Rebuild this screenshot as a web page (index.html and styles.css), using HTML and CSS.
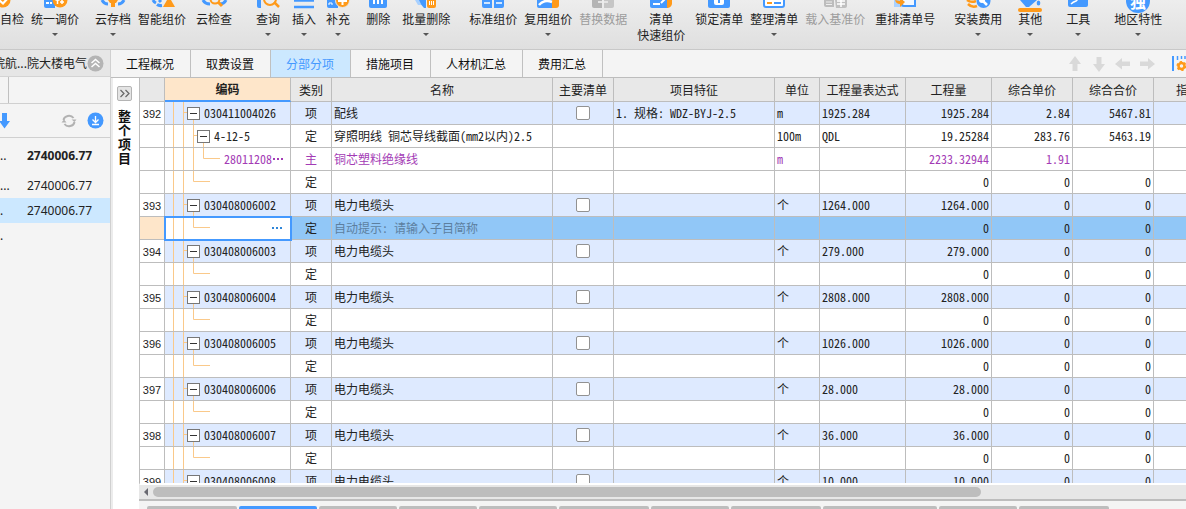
FILE: index.html
```html
<!DOCTYPE html>
<html lang="zh-CN">
<head>
<meta charset="utf-8">
<title>分部分项</title>
<link rel="stylesheet" href="styles.css">
</head>
<body>
<svg class="defs" aria-hidden="true">
  <symbol id="g-item" viewBox="0 0 60 22"><path d="M8.500 0V22M18.500 0V22M19 10.500H22M28.500 17V22"/></symbol>
  <symbol id="g-sub" viewBox="0 0 60 22"><path d="M8.500 0V22M18.500 0V22M28.500 0V22M29 10.500H32M38.500 17V22"/></symbol>
  <symbol id="g-leaf" viewBox="0 0 60 22"><path d="M8.500 0V22M18.500 0V22M28.500 0V22M38.500 0V10.500H55"/></symbol>
  <symbol id="g-end" viewBox="0 0 60 22"><path d="M8.500 0V22M18.500 0V22M28.500 0V10.500H45"/></symbol>
</svg>

<header class="toolbar">
  <button class="tool"><svg class="icon" viewBox="0 0 24 13"><circle cx="3" cy="0" r="7.500" fill="#ff9a1a"/><path d="M-1 0L3 3.500L8 -2" fill="none" stroke="#fff" stroke-width="2.200"/></svg>自检</button>
  <button class="tool s7"><svg class="icon" viewBox="0 0 24 13"><path d="M1 0H12V8H3Q1 8 1 6Z" fill="#4499ff"/><path d="M3 3H6M7 3H9" stroke="#fff" stroke-width="2"/><circle cx="17" cy="0" r="7.500" fill="#ff9a1a"/><path d="M14.500 -3V4M19 -3V4M12.500 0H16.500M17 2H21" stroke="#fff" stroke-width="1.500"/></svg>统一调价<i class="caret"></i></button>
  <button class="tool s16"><svg class="icon" viewBox="0 0 24 13"><path d="M1 0Q3 4 7 4M23 0Q21 4 17 4" fill="none" stroke="#4499ff" stroke-width="3"/><path d="M7 0H17L15 3H14V7H10V3H9Z" fill="#ff9a1a"/></svg>云存档<i class="caret"></i></button>
  <button class="tool s7"><svg class="icon" viewBox="0 0 24 13"><path d="M3 0Q4 2 6 3M7 4.500Q9 6 12 5.500M9 0L11 2" fill="none" stroke="#4499ff" stroke-width="3"/><path d="M17 0H21L25 7H13Z" fill="#ff9a1a"/></svg>智能组价</button>
  <button class="tool s10"><svg class="icon" viewBox="0 0 24 13"><path d="M1 0Q3 4 8 4M18 4Q22 4 24 0" fill="none" stroke="#4499ff" stroke-width="3"/><circle cx="13" cy="-1" r="4.500" fill="none" stroke="#ff9a1a" stroke-width="2"/><path d="M16 2L20 6" stroke="#ff9a1a" stroke-width="3"/></svg>云检查</button>
  <button class="tool s24"><svg class="icon" viewBox="0 0 24 13"><path d="M1 0H5V8H3Q1 8 1 6Z" fill="#4499ff"/><circle cx="14" cy="-1" r="6" fill="none" stroke="#ff9a1a" stroke-width="2"/><path d="M18 2L23 7" stroke="#ff9a1a" stroke-width="2.500"/></svg>查询<i class="caret"></i></button>
  <button class="tool s12"><svg class="icon" viewBox="0 0 24 13"><path d="M2 0.500H22M2 7H22" stroke="#4499ff" stroke-width="2.500"/></svg>插入<i class="caret"></i></button>
  <button class="tool s10"><svg class="icon" viewBox="0 0 24 13"><path d="M1 0H12V8H3Q1 8 1 6Z" fill="#4499ff"/><path d="M3 5V3H6V5" stroke="#fff" fill="none"/><circle cx="16.500" cy="0.500" r="7" fill="#ff9a1a" stroke="#e9e9e9"/><path d="M16.500 -4V5M12 1H21" stroke="#fff" stroke-width="2"/></svg>补充<i class="caret"></i></button>
  <button class="tool s16"><svg class="icon" viewBox="0 0 24 13"><path d="M3 0H21V6Q21 8 19 8H5Q3 8 3 6Z" fill="#4499ff"/><path d="M8 0V4M12 0V4M16 0V4" stroke="#fff" stroke-width="2"/></svg>删除</button>
  <button class="tool s12"><svg class="icon" viewBox="0 0 24 13"><path d="M1 0H8V5H4Z" fill="#a7d0ff"/><path d="M5 0H12V8H10Q7 5 5 0Z" fill="#4499ff"/><path d="M13 0H22V6Q22 8 20 8H15Q13 8 13 6Z" fill="#ff9a1a"/><path d="M15.500 1V5M17.500 1V5M19.500 1V5" stroke="#fff"/></svg>批量删除<i class="caret"></i></button>
  <button class="tool s19"><svg class="icon" viewBox="0 0 24 13"><path d="M1 0H11V8H3Q1 8 1 6ZM13 0H23V6Q23 8 21 8H13Z" fill="#4499ff"/><path d="M3 3H9M15 3H21" stroke="#fff" stroke-width="1.500"/></svg>标准组价</button>
  <button class="tool s7"><svg class="icon" viewBox="0 0 24 13"><path d="M1 0H19V8H3Q1 8 1 6Z" fill="#4499ff"/><path d="M16 0H23V5Q23 8 20 8H16Z" fill="#ff9a1a"/><path d="M3 5Q8 -1 16 2" stroke="#fff" stroke-width="2.500" fill="none"/></svg>复用组价<i class="caret"></i></button>
  <button class="tool s7" disabled><svg class="icon" viewBox="0 0 24 13"><path d="M1 0H11V8H3Q1 8 1 6Z" fill="#b4b4b4"/><path d="M13 0H23V6Q23 8 21 8H13Z" fill="#c6c6c6"/><path d="M7 2H11M13 2H17" stroke="#e4e4e4" stroke-width="2"/></svg>替换数据</button>
  <button class="tool s10"><svg class="icon" viewBox="0 0 24 13"><path d="M1 0H19V8H3Q1 8 1 6Z" fill="#4499ff"/><path d="M18 0H23V4Q22 8 18 8Z" fill="#ff9a1a"/><path d="M4 4H11M12 3L17 -2" stroke="#fff" stroke-width="2"/></svg>清单<span>快速组价</span></button>
  <button class="tool s10"><svg class="icon" viewBox="0 0 24 13"><path d="M1 0H23V6Q23 8 21 8H3Q1 8 1 6Z" fill="#4499ff"/><rect x="7" y="-4" width="10" height="9" rx="2" fill="#fff"/><path d="M12 0V3" stroke="#4499ff" stroke-width="2"/></svg>锁定清单</button>
  <button class="tool s7"><svg class="icon" viewBox="0 0 24 13"><path d="M2 0V5Q2 7 4 7H20Q22 7 22 5V0" fill="#fff" stroke="#4499ff" stroke-width="2"/><path d="M5 3H10" stroke="#ff9a1a" stroke-width="2"/><path d="M12 3H19" stroke="#4499ff" stroke-width="2"/></svg>整理清单<i class="caret"></i></button>
  <button class="tool s7" disabled><svg class="icon" viewBox="0 0 24 13"><path d="M1 0H11V7H3Q1 7 1 5Z" fill="#bcbcbc"/><path d="M3 2H9M3 4.500H9" stroke="#eee"/><path d="M12 0H24V6Q24 8 22 8H13Z" fill="#c0c0c0"/><path d="M18 0V7M14 1H22M14 4H22" stroke="#fff" stroke-width="1.500"/></svg>载入基准价</button>
  <button class="tool s10"><svg class="icon" viewBox="0 0 24 13"><path d="M1 0H20V6Q20 7 18 7H1Z" fill="#a9d1ff"/><path d="M9 0V4Q9 6 11 6H22V0" fill="#f3f8ff" stroke="#4499ff" stroke-width="2"/><path d="M2 0Q3 4 7 4V7L12 2L7 -2V1Z" fill="#ff9a1a"/></svg>重排清单号</button>
  <button class="tool s19"><svg class="icon" viewBox="0 0 24 13"><path d="M1 0Q5 3 10 1M2 4Q6 8 11 6" fill="none" stroke="#ff9a1a" stroke-width="2.500"/><circle cx="17.500" cy="1" r="7" fill="#4499ff"/><path d="M16 0L21 5" stroke="#fff" stroke-width="2.500"/><circle cx="16" cy="0" r="3" fill="#fff"/></svg>安装费用<i class="caret"></i></button>
  <button class="tool s16"><svg class="icon" viewBox="0 0 24 13"><path d="M2 0H19L11 7H8Z" fill="#4499ff"/><ellipse cx="20.500" cy="3" rx="1.800" ry="2.500" fill="#4499ff"/><path d="M2 10H22" stroke="#ff9a1a" stroke-width="4" stroke-linecap="round"/></svg>其他<i class="caret"></i></button>
  <button class="tool s24"><svg class="icon" viewBox="0 0 24 13"><path d="M2 0H22V5Q22 7 20 7H4Q2 7 2 5Z" fill="#4499ff"/><path d="M5 4Q7 2 10 1L13 -2" stroke="#fff" stroke-width="1.500" fill="none"/></svg>工具<i class="caret"></i></button>
  <button class="tool s24"><svg class="icon" viewBox="0 0 24 13"><circle cx="12" cy="1" r="12" fill="#4499ff"/><text x="12" y="8" class="badge-text">独</text></svg>地区特性<i class="caret"></i></button>
</header>

<div class="workspace">
  <aside class="panel">
    <div class="panel-title"><span>院航...院大楼电气</span><button class="plain" aria-label="收起"><svg width="17" height="17" viewBox="0 0 17 17"><circle cx="8.500" cy="8.500" r="8" fill="#b4b4b4"/><path d="M4.500 8L8.500 4.500L12.500 8M4.500 12L8.500 8.500L12.500 12" fill="none" stroke="#fff" stroke-width="1.500"/></svg></button></div>
    <div class="panel-tabs"><span></span></div>
    <div class="panel-tools">
      <button class="plain" aria-label="下移"><svg width="10" height="16" viewBox="0 0 10 16"><path d="M2 0H7V8H10L4.500 15.500L-1 8H2Z" fill="#4499ff"/></svg></button>
      <span class="grow"></span>
      <button class="plain" aria-label="刷新"><svg width="16" height="16" viewBox="0 0 16 16"><path d="M2.500 7A5.500 5 0 0 1 12.500 5M13.500 9A5.500 5 0 0 1 3.500 11" fill="none" stroke="#b2b2b2" stroke-width="2"/><path d="M10.500 6.500H15.500L13.500 9ZM.500 9.500L3 6.500L5.500 9.500Z" fill="#b2b2b2"/></svg></button>
      <button class="plain" aria-label="下载"><svg width="17" height="17" viewBox="0 0 17 17"><circle cx="8.500" cy="8.500" r="8" fill="#4499ff"/><path d="M8.500 4V10M5.500 7.500L8.500 10.500L11.500 7.500M5 12.500H12" fill="none" stroke="#fff" stroke-width="1.300"/></svg></button>
    </div>
    <ul class="totals">
      <li class="total"><span>..</span><b>2740006.77</b></li>
      <li><span>...</span>2740006.77</li>
      <li class="current"><span>.</span>2740006.77</li>
      <li><span>.</span></li>
    </ul>
  </aside>

  <main class="main">
    <nav class="tabs">
      <button class="tab">工程概况</button>
      <button class="tab">取费设置</button>
      <button class="tab active">分部分项</button>
      <button class="tab">措施项目</button>
      <button class="tab">人材机汇总</button>
      <button class="tab">费用汇总</button>
      <div class="tab-actions">
        <button class="plain" aria-label="上移"><svg width="16" height="16" viewBox="0 0 16 16"><path d="M8 0L14 8H10.500V15H5.500V8H2Z" fill="#d9d9d9"/></svg></button>
        <button class="plain" aria-label="下移"><svg width="16" height="16" viewBox="0 0 16 16"><path d="M8 16L14 8H10.500V1H5.500V8H2Z" fill="#d9d9d9"/></svg></button>
        <button class="plain" aria-label="左移"><svg width="16" height="16" viewBox="0 0 16 16"><path d="M0 8L7 2V5.500H15V10H7V13.500Z" fill="#d9d9d9"/></svg></button>
        <button class="plain" aria-label="右移"><svg width="16" height="16" viewBox="0 0 16 16"><path d="M16 8L9 2V5.500H1V10H9V13.500Z" fill="#d9d9d9"/></svg></button>
        <button class="plain settings" aria-label="列设置"><svg width="14" height="16" viewBox="0 0 14 16"><path d="M1 0V15" stroke="#4499ff" stroke-width="2"/><path d="M5.500 0V4M9.500 0V3M13 0V3" stroke="#4499ff" stroke-width="1.500"/><circle cx="9.500" cy="10" r="3" fill="none" stroke="#ff9a1a" stroke-width="2.500"/><circle cx="9.500" cy="10" r="4.300" fill="none" stroke="#ff9a1a" stroke-width="1.500" stroke-dasharray="2.250 2.250"/></svg></button>
      </div>
    </nav>

    <div class="content">
      <div class="side">
        <button class="expand" aria-label="展开"><svg width="13" height="13" viewBox="0 0 13 13"><path d="M2.500 3L6 6.500L2.500 10M7.500 3L11 6.500L7.500 10" fill="none" stroke="#666" stroke-width="1.200"/></svg></button>
        <span class="side-label">整个项目</span>
      </div>

      <div class="sheet">
        <div class="viewport">
          <table class="grid">
            <colgroup><col class="c-no"><col class="c-code"><col class="c-kind"><col class="c-name"><col class="c-main"><col class="c-feat"><col class="c-unit"><col class="c-qty"><col class="c-qty"><col class="c-sum"><col class="c-sum"><col class="c-sum"></colgroup>
            <thead><tr><th></th><th class="sorted">编码</th><th>类别</th><th>名称</th><th>主要清单</th><th>项目特征</th><th>单位</th><th>工程量表达式</th><th>工程量</th><th>综合单价</th><th>综合合价</th><th class="cut">指</th></tr></thead>
            <tbody>
              <tr class="item"><th>392</th><td class="code"><div><svg class="guide"><use href="#g-item"/></svg><span><button class="fold" aria-label="折叠"></button>030411004026</span></div></td><td class="kind">项</td><td>配线</td><td class="pick"><input type="checkbox" aria-label="主要清单"></td><td>1. 规格: WDZ-BYJ-2.5</td><td>m</td><td>1925.284</td><td class="num">1925.284</td><td class="num">2.84</td><td class="num">5467.81</td><td></td></tr>
              <tr><th></th><td class="code sub"><div><svg class="guide"><use href="#g-sub"/></svg><span><button class="fold" aria-label="折叠"></button>4-12-5</span></div></td><td class="kind">定</td><td>穿照明线 铜芯导线截面(mm2以内)2.5</td><td></td><td></td><td>100m</td><td>QDL</td><td class="num">19.25284</td><td class="num">283.76</td><td class="num">5463.19</td><td></td></tr>
              <tr class="material"><th></th><td class="code leaf"><div><svg class="guide"><use href="#g-leaf"/></svg><span>28011208<i class="more"></i></span></div></td><td class="kind">主</td><td>铜芯塑料绝缘线</td><td></td><td></td><td>m</td><td></td><td class="num">2233.32944</td><td class="num">1.91</td><td></td><td></td></tr>
              <tr><th></th><td class="code"><div><svg class="guide"><use href="#g-end"/></svg></div></td><td class="kind">定</td><td></td><td></td><td></td><td></td><td></td><td class="num">0</td><td class="num">0</td><td class="num">0</td><td></td></tr>
              <tr class="item"><th>393</th><td class="code"><div><svg class="guide"><use href="#g-item"/></svg><span><button class="fold" aria-label="折叠"></button>030408006002</span></div></td><td class="kind">项</td><td>电力电缆头</td><td class="pick"><input type="checkbox" aria-label="主要清单"></td><td></td><td>个</td><td>1264.000</td><td class="num">1264.000</td><td class="num">0</td><td class="num">0</td><td></td></tr>
              <tr class="selected"><th></th><td class="code editing"><div><svg class="guide"><use href="#g-end"/></svg><button class="browse" aria-label="选择"><i class="more"></i></button></div></td><td class="kind">定</td><td class="hint">自动提示: 请输入子目简称</td><td></td><td></td><td></td><td></td><td class="num">0</td><td class="num">0</td><td class="num">0</td><td></td></tr>
              <tr class="item"><th>394</th><td class="code"><div><svg class="guide"><use href="#g-item"/></svg><span><button class="fold" aria-label="折叠"></button>030408006003</span></div></td><td class="kind">项</td><td>电力电缆头</td><td class="pick"><input type="checkbox" aria-label="主要清单"></td><td></td><td>个</td><td>279.000</td><td class="num">279.000</td><td class="num">0</td><td class="num">0</td><td></td></tr>
              <tr><th></th><td class="code"><div><svg class="guide"><use href="#g-end"/></svg></div></td><td class="kind">定</td><td></td><td></td><td></td><td></td><td></td><td class="num">0</td><td class="num">0</td><td class="num">0</td><td></td></tr>
              <tr class="item"><th>395</th><td class="code"><div><svg class="guide"><use href="#g-item"/></svg><span><button class="fold" aria-label="折叠"></button>030408006004</span></div></td><td class="kind">项</td><td>电力电缆头</td><td class="pick"><input type="checkbox" aria-label="主要清单"></td><td></td><td>个</td><td>2808.000</td><td class="num">2808.000</td><td class="num">0</td><td class="num">0</td><td></td></tr>
              <tr><th></th><td class="code"><div><svg class="guide"><use href="#g-end"/></svg></div></td><td class="kind">定</td><td></td><td></td><td></td><td></td><td></td><td class="num">0</td><td class="num">0</td><td class="num">0</td><td></td></tr>
              <tr class="item"><th>396</th><td class="code"><div><svg class="guide"><use href="#g-item"/></svg><span><button class="fold" aria-label="折叠"></button>030408006005</span></div></td><td class="kind">项</td><td>电力电缆头</td><td class="pick"><input type="checkbox" aria-label="主要清单"></td><td></td><td>个</td><td>1026.000</td><td class="num">1026.000</td><td class="num">0</td><td class="num">0</td><td></td></tr>
              <tr><th></th><td class="code"><div><svg class="guide"><use href="#g-end"/></svg></div></td><td class="kind">定</td><td></td><td></td><td></td><td></td><td></td><td class="num">0</td><td class="num">0</td><td class="num">0</td><td></td></tr>
              <tr class="item"><th>397</th><td class="code"><div><svg class="guide"><use href="#g-item"/></svg><span><button class="fold" aria-label="折叠"></button>030408006006</span></div></td><td class="kind">项</td><td>电力电缆头</td><td class="pick"><input type="checkbox" aria-label="主要清单"></td><td></td><td>个</td><td>28.000</td><td class="num">28.000</td><td class="num">0</td><td class="num">0</td><td></td></tr>
              <tr><th></th><td class="code"><div><svg class="guide"><use href="#g-end"/></svg></div></td><td class="kind">定</td><td></td><td></td><td></td><td></td><td></td><td class="num">0</td><td class="num">0</td><td class="num">0</td><td></td></tr>
              <tr class="item"><th>398</th><td class="code"><div><svg class="guide"><use href="#g-item"/></svg><span><button class="fold" aria-label="折叠"></button>030408006007</span></div></td><td class="kind">项</td><td>电力电缆头</td><td class="pick"><input type="checkbox" aria-label="主要清单"></td><td></td><td>个</td><td>36.000</td><td class="num">36.000</td><td class="num">0</td><td class="num">0</td><td></td></tr>
              <tr><th></th><td class="code"><div><svg class="guide"><use href="#g-end"/></svg></div></td><td class="kind">定</td><td></td><td></td><td></td><td></td><td></td><td class="num">0</td><td class="num">0</td><td class="num">0</td><td></td></tr>
              <tr class="item"><th>399</th><td class="code"><div><svg class="guide"><use href="#g-item"/></svg><span><button class="fold" aria-label="折叠"></button>030408006008</span></div></td><td class="kind">项</td><td>电力电缆头</td><td class="pick"><input type="checkbox" aria-label="主要清单"></td><td></td><td>个</td><td>10.000</td><td class="num">10.000</td><td class="num">0</td><td class="num">0</td><td></td></tr>
            </tbody>
          </table>
        </div>
        <div class="scrollbar"><svg width="14" height="14" viewBox="0 0 14 14"><path d="M9 3V11L5 7Z" fill="#6a6a72"/></svg><div class="track"><div class="thumb"></div></div></div>
        <div class="bottom-tabs"><i class="w90"></i><i class="on"></i><i></i><i></i><i></i><i class="w90"></i><i></i><i class="w90"></i><i class="w114"></i><i></i><i class="w90"></i></div>
      </div>
    </div>
  </main>
</div>
</body>
</html>
```

FILE: styles.css
```css
* { box-sizing: border-box; }

body {
  margin: 0;
  height: 100vh;
  display: flex;
  flex-direction: column;
  overflow: hidden;
  background: #f4f4f4;
  color: #222;
  font: 12px/16px "Noto Sans CJK SC", sans-serif;
}

button {
  margin: 0;
  padding: 0;
  border: 0;
  background: none;
  color: inherit;
  font: inherit;
}

svg { display: block; }
.defs { position: absolute; width: 0; height: 0; }
.plain { display: block; flex: none; }
.grow { flex: 1; }

/* Toolbar */
.toolbar {
  flex: none;
  display: flex;
  align-items: flex-start;
  height: 50px;
  overflow: hidden;
  border-bottom: 1px solid #c8c8c8;
  background: linear-gradient(#ededed, #dfdfdf);
}
.tool {
  flex: none;
  display: flex;
  flex-direction: column;
  align-items: center;
  white-space: nowrap;
}
.tool:disabled { color: #9c9c9c; }
.icon { width: 24px; height: 13px; margin-bottom: -2px; overflow: visible; }
.badge-text {
  fill: #fff;
  font-size: 16px;
  font-weight: 700;
  text-anchor: middle;
}
.s7 { margin-left: 7px; }
.s10 { margin-left: 10px; }
.s12 { margin-left: 12px; }
.s16 { margin-left: 16px; }
.s19 { margin-left: 19px; }
.s24 { margin-left: 24px; }
.caret {
  margin-top: 6px;
  border: 3px solid transparent;
  border-top-color: #555;
  border-bottom: 0;
}

/* Left panel */
.workspace { flex: 1; display: flex; min-height: 0; }
.panel {
  flex: none;
  width: 111px;
  border-right: 1px solid #d0d0d0;
}
.panel-title {
  display: flex;
  align-items: center;
  height: 27px;
  background: #e6e6e6;
  border-bottom: 1px solid #d4d4d4;
  white-space: nowrap;
}
.panel-title span { width: 87px; overflow: hidden; direction: rtl; }
.panel-tabs { height: 27px; border-bottom: 1px solid #d0d0d0; }
.panel-tabs span {
  display: block;
  width: 9px;
  height: 100%;
  border-right: 1px solid #c0c0c0;
}
.panel-tools {
  display: flex;
  align-items: center;
  gap: 10px;
  height: 34px;
  padding-right: 6px;
  border-bottom: 1px solid #d0d0d0;
}
.totals {
  margin: 0;
  padding: 0;
  list-style: none;
  font-family: "Noto Sans", "Noto Sans CJK SC", sans-serif;
}
.totals li { display: flex; height: 25px; line-height: 25px; }
.totals .total { height: 35px; line-height: 35px; }
.totals span { width: 27px; }
.totals .current { background: #cce8ff; }

/* Page tabs */
.main { flex: 1; display: flex; flex-direction: column; min-width: 0; }
.tabs {
  flex: none;
  display: flex;
  height: 28px;
  border-bottom: 1px solid #bdbdbd;
}
.tab {
  min-width: 80px;
  padding: 0 16px 0 15px;
  border-right: 1px solid #c0c0c0;
  color: #111;
}
.tab.active { background: #cce8ff; color: #4499ff; }
.tab-actions { display: flex; align-items: center; gap: 8px; margin-left: auto; }
.settings { margin-left: 9px; }

/* Side strip */
.content { flex: 1; display: flex; min-height: 0; }
.side {
  flex: none;
  display: flex;
  flex-direction: column;
  align-items: center;
  gap: 8px;
  width: 28px;
  padding: 8px 3px 0 0;
  border-left: 2px solid #ececec;
  background: #fff;
}
.expand {
  padding: 0;
  border: 1px solid #b4b4b4;
  border-radius: 2px;
  background: #e4e4e4;
}
.side-label {
  width: 13px;
  color: #111;
  font-size: 13px;
  font-weight: 700;
  line-height: 14px;
}

/* Grid */
.sheet { flex: 1; display: flex; flex-direction: column; min-width: 0; }
.viewport {
  flex: 1;
  min-height: 0;
  overflow: hidden;
  border-left: 1px solid #bdbdbd;
  border-bottom: 2px solid #fff;
  background: #fff;
}
.grid {
  width: 1095px;
  table-layout: fixed;
  border-collapse: separate;
  border-spacing: 0;
  font-feature-settings: "hwid" 1;
}
.c-no { width: 25px; }
.c-code { width: 126px; }
.c-kind { width: 41px; }
.c-name { width: 221px; }
.c-main { width: 61px; }
.c-feat { width: 161px; }
.c-unit { width: 45px; }
.c-qty { width: 86px; }
.c-sum { width: 81px; }
.grid th, .grid td {
  height: 23px;
  padding: 0 2px;
  border-right: 1px solid #bdbdbd;
  border-bottom: 1px solid #bdbdbd;
  overflow: hidden;
  text-align: left;
  white-space: nowrap;
}
.grid thead th {
  height: 24px;
  background: #e8e8e8;
  font-weight: 400;
  text-align: center;
}
.grid thead .sorted {
  border-bottom: 2px solid #4499ff;
  background: #fee6ca;
  font-weight: 700;
}
.grid thead .cut { padding-left: 22px; text-align: left; }
.grid tbody th {
  padding: 2px 0 0;
  font-family: "Liberation Sans", sans-serif;
  font-size: 11px;
  font-weight: 400;
  text-align: center;
}
.grid .kind, .grid .pick { text-align: center; }
.item td { background: #deeaff; }
.material td { color: #a33bb5; }
.selected td { background: #91c7f7; }
.selected th { background: #fee6ca; }
.grid .hint { color: #5d7f9f; }

.grid .code { padding: 0; }
.code div { display: grid; height: 22px; }
.code div > * { grid-area: 1 / 1; }
.code span { display: flex; align-items: center; padding-left: 22px; z-index: 1; }
.code.sub span { padding-left: 32px; }
.code.leaf span { padding-left: 59px; }
.guide { width: 60px; height: 22px; fill: none; stroke: #fac98a; }
.fold {
  width: 13px;
  height: 13px;
  margin-right: 4px;
  border: 1px solid #777;
  background: linear-gradient(#333, #333) center / 7px 1px no-repeat #fff;
}
.more {
  width: 12px;
  height: 2px;
  background: repeating-linear-gradient(90deg, transparent 0 1px, currentColor 1px 3px, transparent 3px 4px);
}
.grid .editing { background: #fff; outline: 2px solid #4499ff; outline-offset: -1px; }
.browse {
  display: flex;
  align-items: center;
  justify-self: end;
  padding-right: 7px;
  color: #2f86d8;
}
.pick input {
  appearance: none;
  display: block;
  width: 14px;
  height: 14px;
  margin: 0 auto;
  border: 1px solid #929292;
  border-radius: 2px;
  background: #fff;
}
.num { font-variant-numeric: tabular-nums; }
.grid .num { text-align: right; }

/* Scrollbar and lower tabs */
.scrollbar {
  flex: none;
  display: flex;
  height: 16px;
  border-bottom: 2px solid #bdbdbd;
  background: #e7e7e7;
}
.track { flex: 1; padding: 2px 0; }
.thumb { width: 80.2%; height: 10px; border-radius: 5px; background: #bdbdbd; }
.bottom-tabs {
  flex: none;
  display: flex;
  gap: 2px;
  height: 8px;
  padding: 5px 8px 0;
  overflow: hidden;
}
.bottom-tabs i {
  flex: none;
  width: 78px;
  border-radius: 2px 2px 0 0;
  background: #bdbdbd;
}
.bottom-tabs .on { background: #4499ff; }
.bottom-tabs .w90 { width: 90px; }
.bottom-tabs .w114 { width: 114px; }
```
